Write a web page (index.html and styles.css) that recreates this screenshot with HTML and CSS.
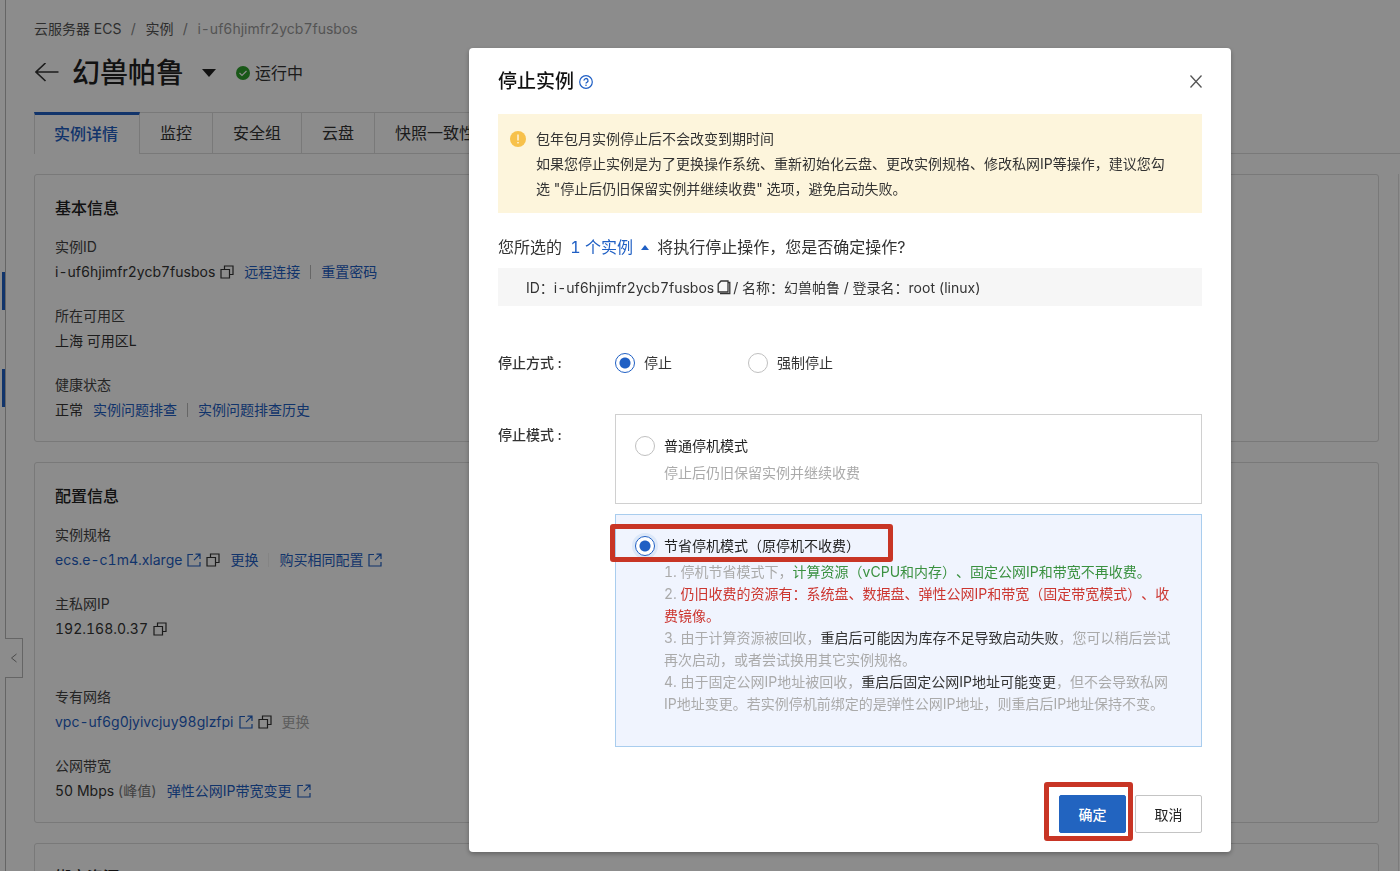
FILE: index.html
```html
<!DOCTYPE html>
<html lang="zh-CN">
<head>
<meta charset="utf-8">
<title>云服务器 ECS - 停止实例</title>
<link rel="stylesheet" href="styles.css">
</head>
<body>
<svg class="sprite" aria-hidden="true">
  <symbol id="copy" viewBox="0 0 14 14"><path d="M1 4.500h8.500v8.500h-8.500zM4.500 4.500v-3.500h8.500v8.500h-3.500" fill="none" stroke="currentColor" stroke-width="1.200"/></symbol>
  <symbol id="ext" viewBox="0 0 14 14"><path d="M6 1.500H1v11.500h12V9M8.500 1.200H13V6M13 1.200L7 7.200" fill="none" stroke="currentColor" stroke-width="1.200"/></symbol>
</svg>
<div class="page">
  <aside class="rail">
    <span class="mark mark-first"></span>
    <span class="mark mark-second"></span>
    <button class="collapse" type="button" aria-label="收起侧栏"><svg viewBox="0 0 8 10"><path d="M6.500 1L1.500 5l5 4" fill="none" stroke="currentColor"/></svg></button>
  </aside>
  <main class="main">
    <nav class="crumbs" aria-label="路径">
      <a href="#">云服务器 ECS</a><span class="slash">/</span><a href="#">实例</a><span class="slash">/</span><span class="current">i-uf6hjimfr2ycb7fusbos</span>
    </nav>
    <header class="heading">
      <button class="back" type="button" aria-label="返回"><svg viewBox="0 0 24 20"><path d="M23.500 9H1M10.500 0L1 9l9.500 9" fill="none" stroke="currentColor" stroke-width="1.600"/></svg></button>
      <h1>幻兽帕鲁</h1>
      <button class="switch" type="button" aria-label="切换实例"><svg viewBox="0 0 14 8"><path d="M0 0h14L7 8z" fill="currentColor"/></svg></button>
      <svg class="ok" viewBox="0 0 14 14"><circle cx="7" cy="7" r="7" fill="#2ea02c"/><path d="M3.500 7l2.500 2.500 4.500-4.500" fill="none" stroke="#fff" stroke-width="1.200"/></svg>
      <span class="state">运行中</span>
    </header>
    <nav class="tabs" aria-label="实例">
      <a class="tab active" href="#">实例详情</a>
      <a class="tab" href="#">监控</a>
      <a class="tab" href="#">安全组</a>
      <a class="tab" href="#">云盘</a>
      <a class="tab" href="#">快照一致性组</a>
    </nav>
    <section class="card">
      <h2>基本信息</h2>
      <dl>
        <div class="item"><dt>实例ID</dt><dd>i-uf6hjimfr2ycb7fusbos<svg class="ico"><use href="#copy"/></svg><a class="lead" href="#">远程连接</a><i class="bar"></i><a href="#">重置密码</a></dd></div>
        <div class="item"><dt>所在可用区</dt><dd>上海 可用区L</dd></div>
        <div class="item"><dt>健康状态</dt><dd>正常<a class="lead" href="#">实例问题排查</a><i class="bar"></i><a href="#">实例问题排查历史</a></dd></div>
      </dl>
    </section>
    <section class="card">
      <h2>配置信息</h2>
      <dl>
        <div class="item"><dt>实例规格</dt><dd><a href="#">ecs.e-c1m4.xlarge<svg class="ico"><use href="#ext"/></svg></a><svg class="ico"><use href="#copy"/></svg><a class="lead" href="#">更换</a><i class="bar faint"></i><a href="#">购买相同配置<svg class="ico"><use href="#ext"/></svg></a></dd></div>
        <div class="item tall"><dt>主私网IP</dt><dd>192.168.0.37<svg class="ico"><use href="#copy"/></svg></dd></div>
        <div class="item"><dt>专有网络</dt><dd><a href="#">vpc-uf6g0jyivcjuy98glzfpi<svg class="ico"><use href="#ext"/></svg></a><svg class="ico"><use href="#copy"/></svg><span class="lead disabled">更换</span></dd></div>
        <div class="item"><dt>公网带宽</dt><dd>50 Mbps <span class="muted">(峰值)</span><a class="lead" href="#">弹性公网IP带宽变更<svg class="ico"><use href="#ext"/></svg></a></dd></div>
      </dl>
    </section>
    <section class="card">
      <h2>绑定资源</h2>
    </section>
  </main>
  <div class="side-card"></div>
</div>

<div class="overlay">
  <form class="dialog" role="dialog" aria-labelledby="dialog-title">
    <header class="dialog-head">
      <h2 id="dialog-title">停止实例</h2>
      <a class="help" href="#" aria-label="帮助"><svg viewBox="0 0 14 14"><circle cx="7" cy="7" r="6.300" fill="none" stroke="currentColor" stroke-width="1.200"/><path d="M5 5.600a2 2 0 1 1 2.900 1.700q-.9.400-.9 1.200" fill="none" stroke="currentColor" stroke-width="1.300"/><circle cx="7" cy="10.300" r=".8" fill="currentColor"/></svg></a>
      <button class="close" type="button" aria-label="关闭"><svg viewBox="0 0 12 14"><path d="M.5 .5l11 12M11.500 .5l-11 12" fill="none" stroke="currentColor" stroke-width="1.300"/></svg></button>
    </header>
    <div class="notice">
      <svg class="warn" viewBox="0 0 16 16"><circle cx="8" cy="8" r="8" fill="#f7c14b"/><path d="M8 3.500v6" stroke="#fff" stroke-width="1.200"/><circle cx="8" cy="11.800" r=".8" fill="#fff"/></svg>
      <div>
        <p>包年包月实例停止后不会改变到期时间</p>
        <p>如果您停止实例是为了更换操作系统、重新初始化云盘、更改实例规格、修改私网IP等操作，建议您勾选 "停止后仍旧保留实例并继续收费" 选项，避免启动失败。</p>
      </div>
    </div>
    <p class="question">您所选的 <a href="#">1 个实例<svg class="up" viewBox="0 0 8 5"><path d="M4 0l4 5H0z" fill="currentColor"/></svg></a> 将执行停止操作，您是否确定操作?</p>
    <div class="target">ID：i-uf6hjimfr2ycb7fusbos<svg class="clip" viewBox="0 0 14 15"><path d="M4 1h7v11H1.200V4zM11 2.500h1.800v11.200H3" fill="none" stroke="currentColor" stroke-width="1.300"/></svg>/ 名称：幻兽帕鲁 / 登录名：root (linux)</div>
    <div class="field way">
      <span class="name">停止方式 :</span>
      <div class="choices">
        <label><input type="radio" name="way" checked>停止</label>
        <label><input type="radio" name="way">强制停止</label>
      </div>
    </div>
    <div class="field">
      <span class="name mode-name">停止模式 :</span>
      <div class="modes">
        <div class="mode">
          <label><input type="radio" name="mode">普通停机模式</label>
          <p class="desc">停止后仍旧保留实例并继续收费</p>
        </div>
        <div class="mode selected">
          <label><input type="radio" name="mode" checked>节省停机模式（原停机不收费）</label>
          <span class="frame frame-mode"></span>
          <div class="desc">
            <p>1. 停机节省模式下，<span class="green">计算资源（vCPU和内存）、固定公网IP和带宽不再收费。</span></p>
            <p>2. <span class="red">仍旧收费的资源有：系统盘、数据盘、弹性公网IP和带宽（固定带宽模式）、收费镜像。</span></p>
            <p>3. 由于计算资源被回收，<span class="dark">重启后可能因为库存不足导致启动失败</span>，您可以稍后尝试再次启动，或者尝试换用其它实例规格。</p>
            <p>4. 由于固定公网IP地址被回收，<span class="dark">重启后固定公网IP地址可能变更</span>，但不会导致私网IP地址变更。若实例停机前绑定的是弹性公网IP地址，则重启后IP地址保持不变。</p>
          </div>
        </div>
      </div>
    </div>
    <footer class="actions">
      <div class="primary-wrap"><button class="btn primary" type="button">确定</button><span class="frame frame-ok"></span></div>
      <button class="btn" type="button">取消</button>
    </footer>
  </form>
</div>
</body>
</html>
```
FILE: styles.css
```css
* { box-sizing: border-box; }
body {
  margin: 0;
  height: 100vh;
  overflow: hidden;
  background: #fff;
  color: #333;
  font: 14px/25px Inter, "Noto Sans CJK SC", sans-serif;
  font-variant-numeric: tabular-nums;
  text-spacing-trim: space-all;
}
h1, h2, p, dl, dd { margin: 0; }
a { color: #1f5fc4; text-decoration: none; }
button { font: inherit; padding: 0; border: 0; background: none; color: inherit; cursor: pointer; }
svg { display: block; flex: none; }
.sprite { position: absolute; width: 0; height: 0; }

.page { display: flex; height: 100vh; overflow: hidden; }
.rail { position: relative; flex: none; width: 6px; border-right: 1px solid #b8b8b8; }
.mark { position: absolute; left: 2px; width: 3px; height: 38px; background: #1f5fc4; }
.mark-first { top: 272px; }
.mark-second { top: 369px; }
.collapse {
  position: absolute; left: 5px; top: 638px;
  display: flex; align-items: center; justify-content: center;
  width: 18px; height: 40px;
  background: #fff; border: 1px solid #b8b8b8; border-left: 0; color: #888;
}
.collapse svg { width: 8px; height: 10px; }
.main { flex: 1; min-width: 0; padding-top: 16px; }
.side-card { flex: none; width: 2px; margin: 174px 0 0 19px; border-left: 1px solid #e2e2e2; }

.crumbs { display: flex; padding-left: 28px; }
.crumbs a { color: #555; }
.slash { width: 24px; text-align: center; color: #888; }
.current { color: #999; }
.heading { display: flex; align-items: center; height: 40px; margin: 12px 0 19px; padding-left: 29px; }
.back svg { width: 24px; height: 20px; }
.heading h1 { margin-left: 13px; font-size: 28px; font-weight: 500; line-height: 40px; color: #222; }
.switch { margin-left: 18px; color: #222; }
.switch svg { width: 14px; height: 8px; }
.ok { width: 14px; height: 14px; margin-left: 20px; }
.state { margin-left: 5px; font-size: 16px; }

.tabs { display: flex; height: 42px; margin-right: -21px; padding-left: 28px; }
.tabs::after { content: ""; flex: 1; border-bottom: 1px solid #dcdcdc; }
.tab {
  padding: 0 20px; font-size: 16px; line-height: 41px; color: #333; white-space: nowrap;
  border: solid #dcdcdc; border-width: 1px 1px 1px 0;
}
.tab.active {
  padding: 0 21px 0 19px; line-height: 38px; font-weight: 500; color: #1f5fc4;
  border-top: 3px solid #1f5fc4; border-bottom: 0; border-left: 1px solid #dcdcdc;
}

.card { margin: 20px 0 0 28px; padding: 20px; border: 1px solid #dcdcdc; border-radius: 3px; }
.card h2 { font-size: 16px; font-weight: 500; line-height: 26px; color: #222; }
.card dl { margin-top: 13px; }
.item { margin-bottom: 19px; }
.item:last-child { margin-bottom: -1px; }
.item.tall { margin-bottom: 43px; }
dt { color: #444; }
dd { display: flex; align-items: center; white-space: pre; }
dd a { display: flex; align-items: center; }
.ico { width: 14px; height: 14px; margin-left: 5px; }
.lead { margin-left: 10px; }
.bar { width: 1px; height: 14px; margin: 0 10px; background: #bbb; }
.bar.faint { background: #f0f0f0; }
.disabled { color: #aaa; }
.muted { color: #777; }

.overlay {
  position: fixed; inset: 0; overflow: hidden;
  display: flex; justify-content: center; align-items: flex-start;
  padding: 48px 0 0 300px;
  background: rgba(0, 0, 0, .45);
}
.dialog {
  width: 762px; padding: 20px 29px 19px; background: #fff; border-radius: 4px;
  box-shadow: 0 2px 5px rgba(0, 0, 0, .3);
}
.dialog-head { display: flex; align-items: center; height: 28px; margin-bottom: 18px; }
.dialog-head h2 { font-size: 19px; font-weight: 500; line-height: 28px; color: #111; }
.help { margin-left: 5px; }
.help svg { width: 14px; height: 14px; }
.close { margin-left: auto; color: #555; }
.close svg { width: 12px; height: 14px; }
.notice { display: flex; gap: 10px; padding: 12px 24px 12px 12px; background: #fdf5dc; }
.warn { width: 16px; height: 16px; margin-top: 5px; }
.question { display: flex; align-items: center; margin: 21px 0 8px; font-size: 16px; line-height: 26px; white-space: pre; }
.question a { display: flex; align-items: center; margin: 0 3px 0 4px; }
.up { width: 8px; height: 5px; margin: 0 1px 0 8px; }
.target { display: flex; align-items: center; height: 38px; padding-left: 28px; background: #f6f6f6; white-space: pre; }
.clip { width: 14px; height: 15px; margin: 0 2px 0 3px; }
.field { display: flex; }
.way { margin: 44px 0 39px; }
.name { flex: none; width: 117px; font-weight: 500; }
.mode-name { padding-top: 8px; }
.choices { display: flex; gap: 76px; }
label { display: flex; align-items: center; gap: 9px; }
input[type="radio"] {
  appearance: none; flex: none; width: 20px; height: 20px; margin: 0;
  border: 1px solid #c0c0c0; border-radius: 50%; background: #fff;
}
input[type="radio"]:checked {
  border-color: #1f5fc4;
  background: radial-gradient(circle, #1f5fc4 5px, #fff 6px);
}
.modes { flex: 1; display: grid; gap: 10px; }
.mode { position: relative; padding: 18px 19px; border: 1px solid #d0d0d0; }
.mode label { color: #222; }
.desc { margin: 2px 0 0 29px; color: #aaa; }
.mode.selected { border-color: #a9cdee; background: #f0f4fe; padding-bottom: 31px; }
.selected input { box-shadow: 0 0 0 3px #dce8f9; }
.selected .desc { margin: 3px 2px 0 29px; line-height: 22px; }
.green { color: #3a9140; }
.red { color: #cc3630; }
.dark { color: #333; }
.frame { position: absolute; border: 5px solid #c83525; border-radius: 3px; pointer-events: none; }
.frame-mode { left: -6px; top: 9px; width: 283px; height: 38px; }
.frame-ok { inset: -13px -7px -8px -15px; }
.actions { display: flex; justify-content: flex-end; gap: 9px; margin-top: 48px; }
.primary-wrap { position: relative; }
.btn { display: block; width: 67px; height: 38px; border: 1px solid #c4c4c4; border-radius: 2px; color: #222; }
.primary { background: #2264c0; border-color: #2264c0; color: #fff; font-weight: 500; }
```
